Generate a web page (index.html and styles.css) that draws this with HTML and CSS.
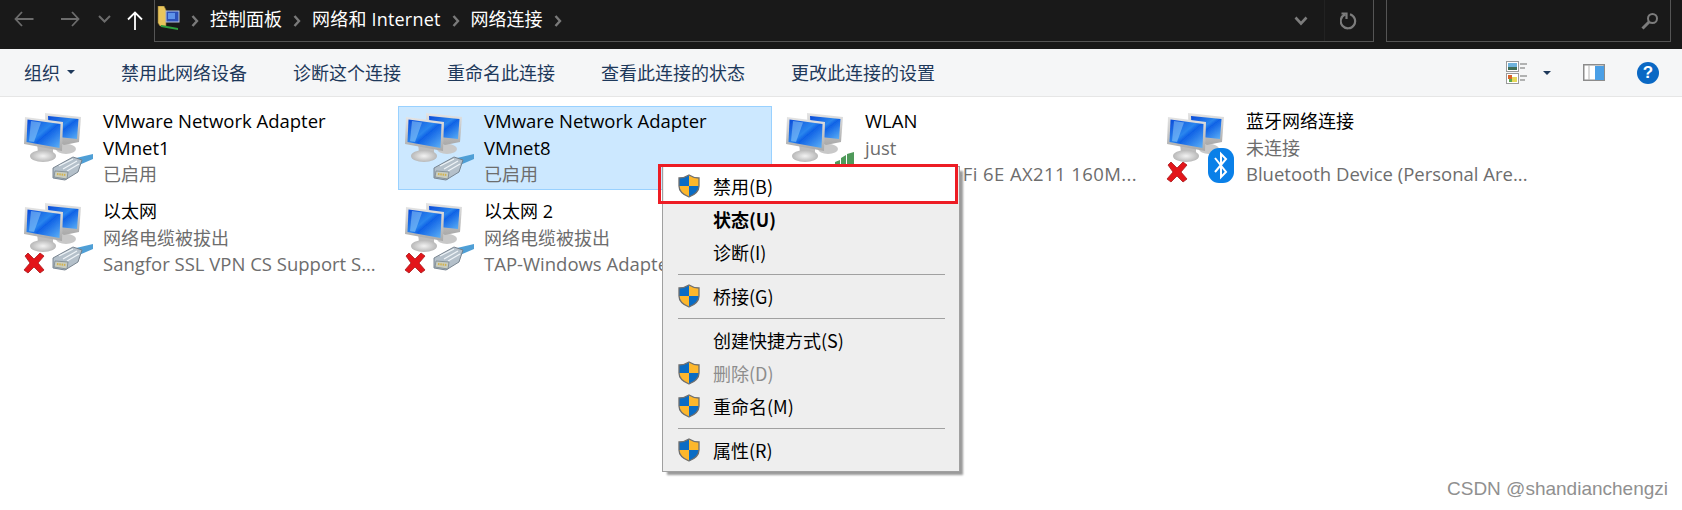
FILE: index.html
```html
<!DOCTYPE html>
<html lang="zh-CN">
<head>
<meta charset="utf-8">
<title>网络连接</title>
<link rel="stylesheet" href="styles.css">
</head>
<body>
<svg class="defs" width="0" height="0">
  <defs>
    <linearGradient id="scr" x1="0" y1="0" x2="1" y2="1">
      <stop offset="0" stop-color="#0a49d8"/><stop offset=".45" stop-color="#2a86ee"/><stop offset=".55" stop-color="#0f62e6"/><stop offset="1" stop-color="#5fb2f6"/>
    </linearGradient>
    <linearGradient id="bez" x1="0" y1="0" x2="0" y2="1">
      <stop offset="0" stop-color="#e4e4e4"/><stop offset="1" stop-color="#a9a9a9"/>
    </linearGradient>
    <radialGradient id="stand"><stop offset="0" stop-color="#f2f2f2"/><stop offset="1" stop-color="#b8b8b8"/></radialGradient>
    <filter id="soft" x="-5%" y="-5%" width="110%" height="110%"><feGaussianBlur stdDeviation=".45"/></filter>
    <clipPath id="sc"><path d="M11 1C8 3 4 4 1 4V12C1 18 6 21 11 23C16 21 21 18 21 12V4C18 4 14 3 11 1Z"/></clipPath>
    <symbol id="pcs" viewBox="0 0 72 72">
      <g filter="url(#soft)">
        <ellipse cx="44" cy="37" rx="10" ry="5" fill="#c8c8c8"/>
        <path d="M23 1 59 5 57 30 42 33 24 26Z" fill="url(#bez)"/>
        <path d="M26 4 56.500 7 55 27 27 24Z" fill="url(#scr)"/>
        <path d="M15 32 31 35 31 42 16 40Z" fill="#bdbdbd"/>
        <ellipse cx="21" cy="44" rx="13" ry="6" fill="url(#stand)"/>
        <path d="M3 5 41 10 40 39 2 32Z" fill="url(#bez)"/>
        <path d="M5.500 7.500 38.500 12 37.500 36 4.500 30Z" fill="url(#scr)"/>
        <path d="M9 9 19 10.500 12 30 7 29Z" fill="#8ec8fa" opacity=".55"/>
      </g>
    </symbol>
    <symbol id="plug" viewBox="0 0 72 72">
      <g filter="url(#soft)">
        <path d="M54 46 71 42 71 47 57 53Z" fill="#4f9fd6"/>
        <path d="M31 56 51 45 60 48 56 60 43 68 31 66Z" fill="#b4c0ca" stroke="#6f7c88" stroke-width=".9"/>
        <path d="M37 54 51 47M41 57 55 49M45 59 57 52" stroke="#eef3f7" stroke-width="1.300" fill="none"/>
        <path d="M33 59 46 60 45 67 32 65Z" fill="#c9cdc0" stroke="#6f7c88" stroke-width=".7"/>
        <path d="M35 62 44 63" stroke="#d3b34e" stroke-width="2" stroke-dasharray="1.500 .8" fill="none"/>
      </g>
    </symbol>
    <symbol id="redx" viewBox="0 0 22 22">
      <path d="M2 4 5 1 11 7 17 1 21 4 15 11 21 18 17 21 11 15 5 21 1 18 7 11Z" fill="#e3151a" stroke="#a81a1d" stroke-width=".8"/>
    </symbol>
    <symbol id="shield" viewBox="0 0 22 24">
      <g clip-path="url(#sc)">
        <rect width="11" height="12" fill="#0a6cc4"/><rect x="11" width="11" height="12" fill="#fdb72c"/>
        <rect y="12" width="11" height="12" fill="#fdb72c"/><rect x="11" y="12" width="11" height="12" fill="#0a6cc4"/>
      </g>
      <path d="M11 1C8 3 4 4 1 4V12C1 18 6 21 11 23C16 21 21 18 21 12V4C18 4 14 3 11 1Z" fill="none" stroke="#6f6f6f" stroke-width="1.3"/>
    </symbol>
  </defs>
</svg>

<header class="nav">
  <svg class="nav-ico back" viewBox="0 0 20 16"><path d="M19.500 8H1.500M8 1 1.500 8 8 15"/></svg>
  <svg class="nav-ico fwd" viewBox="0 0 19 16"><path d="M0 8H17.500M11 1 17.500 8 11 15"/></svg>
  <svg class="nav-ico drop" viewBox="0 0 13 8"><path d="M1 1 6.500 6.500 12 1"/></svg>
  <svg class="nav-ico up" viewBox="0 0 16 19"><path d="M8 19V1.500M1 8.500 8 1.500 15 8.500"/></svg>
  <div class="address">
    <svg class="loc" viewBox="0 0 23 24">
      <path d="M1 0H7L9 4V20H3L1 17Z" fill="#e8c55c" stroke="#8a7433" stroke-width=".6"/>
      <rect x="9" y="5" width="13" height="11" fill="#2c50b8" stroke="#b8c4dc"/>
      <rect x="11" y="7" width="7" height="6" fill="#5f93ea"/>
      <path d="M4 19 21 22 21 24 4 21Z" fill="#2e9f3e"/>
    </svg>
    <svg class="crumb-sep" viewBox="0 0 8 12"><path d="M1.500 1 6 6 1.500 11"/></svg>
    <span class="crumb">控制面板</span>
    <svg class="crumb-sep" viewBox="0 0 8 12"><path d="M1.500 1 6 6 1.500 11"/></svg>
    <span class="crumb crumb-latin">网络和 Internet</span>
    <svg class="crumb-sep" viewBox="0 0 8 12"><path d="M1.500 1 6 6 1.500 11"/></svg>
    <span class="crumb">网络连接</span>
    <svg class="crumb-sep" viewBox="0 0 8 12"><path d="M1.500 1 6 6 1.500 11"/></svg>
    <svg class="addr-drop" viewBox="0 0 14 10"><path d="M1.500 1.500 7 7.500 12.500 1.500"/></svg>
    <div class="refresh">
      <svg viewBox="0 0 18 18"><path d="M5 2.500A7.200 7.200 0 1 0 10 2.200M1.500 1.500H6.500V7"/></svg>
    </div>
  </div>
  <div class="search">
    <svg viewBox="0 0 18 18"><circle cx="11.500" cy="6.500" r="4.500"/><path class="handle" d="M8 10 1.500 16.500"/></svg>
  </div>
</header>

<nav class="toolbar">
  <span class="tool org">组织<i class="caret"></i></span>
  <span class="tool">禁用此网络设备</span>
  <span class="tool">诊断这个连接</span>
  <span class="tool">重命名此连接</span>
  <span class="tool">查看此连接的状态</span>
  <span class="tool">更改此连接的设置</span>
  <div class="tool-right">
    <svg class="view" viewBox="0 0 22 23">
      <rect x=".5" y=".5" width="12" height="10" fill="#fff" stroke="#9a9a9a"/>
      <rect x="2" y="2" width="9" height="4" fill="#6fb3dc"/><rect x="2" y="6" width="9" height="3" fill="#3f6d56"/>
      <rect x=".5" y="12.500" width="12" height="10" fill="#fff" stroke="#9a9a9a"/>
      <rect x="2" y="14" width="4" height="4" fill="#d8622a"/><rect x="6" y="16" width="5" height="5" fill="#e6d75a"/><rect x="3" y="18" width="3" height="3" fill="#5aa64a"/>
      <path d="M14 3H21M14 7H19M14 15H21M14 19H19" stroke="#6f6f6f" stroke-width="1.200" fill="none"/>
    </svg>
    <i class="caret view-caret"></i>
    <svg class="pane" viewBox="0 0 22 17">
      <rect x=".75" y=".75" width="20.500" height="15.500" fill="#fff" stroke="#8c8c8c" stroke-width="1.500"/>
      <path d="M6 1V16" stroke="#b5b5b5" fill="none"/>
      <rect x="12" y="2" width="9" height="14" fill="#4a9fe6"/>
    </svg>
    <span class="help">?</span>
  </div>
</nav>

<main class="list">
  <div class="conn">
    <div class="ico"><svg viewBox="0 0 72 72"><use href="#pcs"/><use href="#plug"/></svg></div>
    <div class="txt"><div class="name">VMware Network Adapter VMnet1</div><div class="sub zh">已启用</div></div>
  </div>
  <div class="conn selected">
    <div class="ico"><svg viewBox="0 0 72 72"><use href="#pcs"/><use href="#plug"/></svg></div>
    <div class="txt"><div class="name">VMware Network Adapter VMnet8</div><div class="sub zh">已启用</div></div>
  </div>
  <div class="conn">
    <div class="ico"><svg viewBox="0 0 72 72"><use href="#pcs"/>
      <path d="M51 50 56 48V62H51ZM57 46 62 43V62H57ZM63 42 70 40V62H63Z" fill="#4f9a5a"/></svg></div>
    <div class="txt"><div class="name">WLAN</div><div class="sub">just</div><div class="sub wide">Intel(R) Wi-Fi 6E AX211 160M...</div></div>
  </div>
  <div class="conn">
    <div class="ico"><svg viewBox="0 0 72 72"><use href="#pcs"/>
      <use href="#redx" x="1" y="49" width="22" height="22"/>
      <rect x="43" y="36" width="26" height="35" rx="11" fill="#0a80e8"/>
      <path d="M50 46 61 60 56 65V42L61 47 50 60" fill="none" stroke="#fff" stroke-width="2"/></svg></div>
    <div class="txt"><div class="name zh">蓝牙网络连接</div><div class="sub zh">未连接</div><div class="sub">Bluetooth Device (Personal Are...</div></div>
  </div>
  <div class="conn">
    <div class="ico"><svg viewBox="0 0 72 72"><use href="#pcs"/><use href="#plug"/><use href="#redx" x="1" y="50" width="22" height="22"/></svg></div>
    <div class="txt"><div class="name zh">以太网</div><div class="sub zh">网络电缆被拔出</div><div class="sub">Sangfor SSL VPN CS Support S...</div></div>
  </div>
  <div class="conn">
    <div class="ico"><svg viewBox="0 0 72 72"><use href="#pcs"/><use href="#plug"/><use href="#redx" x="1" y="50" width="22" height="22"/></svg></div>
    <div class="txt"><div class="name zh">以太网 2</div><div class="sub zh">网络电缆被拔出</div><div class="sub">TAP-Windows Adapter V9</div></div>
  </div>
</main>

<div class="menu">
  <div class="mi marked"><svg class="sh" viewBox="0 0 22 24"><use href="#shield"/></svg><span>禁用(B)</span></div>
  <div class="mi bold"><span>状态(U)</span></div>
  <div class="mi"><span>诊断(I)</span></div>
  <div class="sep"></div>
  <div class="mi"><svg class="sh" viewBox="0 0 22 24"><use href="#shield"/></svg><span>桥接(G)</span></div>
  <div class="sep"></div>
  <div class="mi"><span>创建快捷方式(S)</span></div>
  <div class="mi off"><svg class="sh" viewBox="0 0 22 24"><use href="#shield"/></svg><span>删除(D)</span></div>
  <div class="mi"><svg class="sh" viewBox="0 0 22 24"><use href="#shield"/></svg><span>重命名(M)</span></div>
  <div class="sep"></div>
  <div class="mi"><svg class="sh" viewBox="0 0 22 24"><use href="#shield"/></svg><span>属性(R)</span></div>
</div>

<div class="mark">CSDN @shandianchengzi</div>
</body>
</html>
```

FILE: styles.css
```css
*, *::before, *::after { box-sizing: border-box; }
html, body { margin: 0; height: 510px; overflow: hidden; }
body {
  position: relative;
  background: #fff;
  font-family: "Open Sans", "Noto Sans CJK SC", sans-serif;
  font-size: 18px;
  color: #000;
}
.defs { position: absolute; }

/* top bar */
.nav {
  height: 49px;
  background: #191919;
  display: flex;
  align-items: flex-start;
  padding-left: 14px;
}
.nav svg { display: block; fill: none; }
.nav-ico { stroke: #6c6c6c; stroke-width: 1.8; }
.back { width: 20px; height: 16px; margin-top: 11px; }
.fwd { width: 19px; height: 16px; margin: 11px 0 0 27px; }
.drop { width: 13px; height: 8px; margin: 15px 0 0 18px; stroke-width: 2; }
.up { width: 16px; height: 19px; margin: 11px 0 0 16px; stroke: #fff; }
.address {
  width: 1220px;
  height: 42px;
  margin-left: 11px;
  border-left: 1px solid #555;
  border-right: 1px solid #555;
  border-bottom: 1px solid #555;
  display: flex;
  align-items: center;
  padding-left: 2px;
  color: #fff;
}
.loc { width: 23px; height: 24px; margin-top: -5px; }
.crumb-sep { width: 8px; height: 12px; margin: 0 11px 0 11px; stroke: #7a7a7a; stroke-width: 2.4; }
.crumb { line-height: 36px; padding-bottom: 3px; white-space: nowrap; }
.crumb-latin { letter-spacing: .2px; }
.addr-drop { width: 14px; height: 10px; margin-left: auto; stroke: #7c7c7c; stroke-width: 2.6; }
.refresh {
  width: 49px;
  height: 41px;
  margin-left: 16px;
  border-left: 1px solid #222;
  display: flex;
  align-items: center;
  justify-content: center;
}
.refresh svg { width: 18px; height: 18px; stroke: #7c7c7c; stroke-width: 2.2; }
.search {
  width: 285px;
  height: 42px;
  margin-left: 12px;
  border-left: 1px solid #555;
  border-right: 1px solid #555;
  border-bottom: 1px solid #555;
  display: flex;
  align-items: center;
  justify-content: flex-end;
  padding-right: 11px;
}
.search svg { width: 18px; height: 18px; stroke: #7c7c7c; stroke-width: 2; }
.search .handle { stroke-width: 3; }

/* toolbar */
.toolbar {
  height: 48px;
  background: #f5f6f7;
  border-bottom: 1px solid #e6e6e6;
  display: flex;
  align-items: center;
  gap: 46px;
  padding-left: 24px;
  color: #1e395b;
}
.tool { white-space: nowrap; padding-bottom: 2px; }
.org { display: flex; align-items: center; gap: 7px; }
.caret {
  display: block;
  width: 0;
  height: 0;
  border-left: 4px solid transparent;
  border-right: 4px solid transparent;
  border-top: 4px solid #1e395b;
}
.tool-right {
  margin-left: auto;
  display: flex;
  align-items: center;
  padding-right: 23px;
}
.view { display: block; width: 22px; height: 23px; }
.view-caret { margin-left: 15px; }
.pane { display: block; width: 22px; height: 17px; margin-left: 32px; }
.help {
  width: 22px;
  height: 22px;
  margin-left: 32px;
  border-radius: 50%;
  background: #0a68c4;
  color: #fff;
  font: bold 17px/22px "Liberation Sans", sans-serif;
  text-align: center;
}

/* connection list */
.list {
  display: grid;
  grid-template-columns: repeat(4, 374px);
  grid-auto-rows: 84px;
  column-gap: 7px;
  row-gap: 6px;
  padding: 9px 0 0 17px;
}
.conn {
  display: flex;
  align-items: flex-start;
  gap: 9px;
  padding: 1px 4px;
  border: 1px solid transparent;
  font-size: 18.5px;
  line-height: 26.5px;
}
.selected { background: #cce8ff; border-color: #99d1ff; }
.ico { flex: none; width: 72px; height: 72px; margin-top: 4px; }
.ico svg { display: block; width: 72px; height: 72px; }
.txt { width: 282px; }
.sub { color: #6d6d6d; white-space: nowrap; }
.zh { font-size: 18px; }
.wide { letter-spacing: .4px; }

/* context menu */
.menu {
  position: absolute;
  left: 662px;
  top: 166px;
  width: 298px;
  height: 306px;
  padding: 3px 1px 4px;
  background: #eee;
  border: 1px solid #a0a0a0;
  box-shadow: 4px 4px 2px -1px #9a9a9a;
  color: #000;
  font-family: "Noto Sans CJK SC", "Open Sans", sans-serif;
}
.mi {
  position: relative;
  height: 33px;
  display: flex;
  align-items: center;
  padding: 0 0 2px 49px;
}
.sh {
  position: absolute;
  left: 14px;
  top: 4px;
  width: 22px;
  height: 24px;
}
.bold { font-weight: 700; }
.off { color: #8d8d8d; }
.sep { height: 11px; padding-top: 5px; margin: 0 13px 0 14px; }
.sep::before { content: ""; display: block; height: 1px; background: #a0a0a0; }
.marked { background: #fff; }
.marked::before {
  content: "";
  position: absolute;
  left: 0;
  right: 0;
  top: -3px;
  height: 3px;
  background: #fff;
}
.marked::after {
  content: "";
  position: absolute;
  left: -6px;
  top: -6px;
  width: 300px;
  height: 40px;
  border: 3px solid #ed1c24;
}

/* watermark */
.mark {
  position: absolute;
  right: 14px;
  bottom: 9px;
  font: 19px/24px "Liberation Sans", sans-serif;
  color: #909090;
}
```
